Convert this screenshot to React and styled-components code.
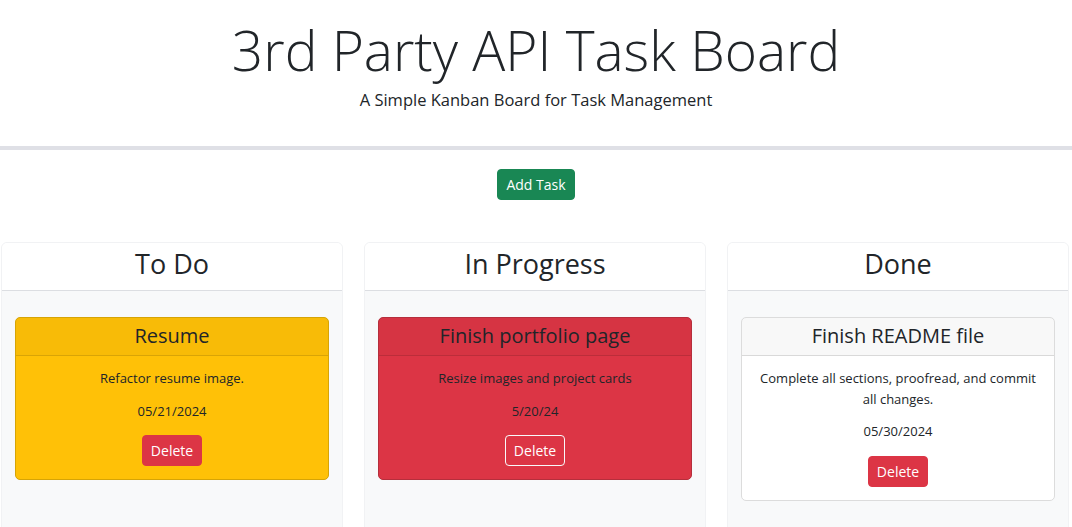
import React from "react";
import styled, { createGlobalStyle, css } from "styled-components";

const GlobalStyle = createGlobalStyle`
  html, body {
    margin: 0;
    padding: 0;
    background: #ffffff;
    color: #212529;
    font-family: "Open Sans", "Noto Sans", sans-serif;
    font-size: 16px;
    line-height: 1.5;
  }
  * { box-sizing: border-box; }
`;

const Header = styled.header`
  text-align: center;
  padding: 17px 16px 34px;
  border-bottom: 4px solid #dfe0e6;
`;

const Title = styled.h1`
  margin: 0;
  font-size: 55px;
  font-weight: 300;
  line-height: 1.2;
  color: #212529;
`;

const Subtitle = styled.p`
  margin: 5px 0 0;
  font-size: 16.5px;
  line-height: 24px;
  color: #212529;
`;

const Toolbar = styled.div`
  display: flex;
  justify-content: center;
  padding: 19px 0 42px;
`;

const Button = styled.button`
  font-family: inherit;
  font-size: 14px;
  line-height: 21px;
  padding: 4px 8px;
  border-radius: 4px;
  border: 1px solid ${(p) => p.$border || p.$bg};
  background: ${(p) => p.$bg};
  color: #ffffff;
  cursor: pointer;
`;

const Board = styled.main`
  display: grid;
  grid-template-columns: repeat(3, 342px);
  column-gap: 21px;
  padding: 0 1px;
`;

const Lane = styled.section`
  display: flex;
  flex-direction: column;
  border: 1px solid #f1f2f4;
  border-radius: 6px;
  overflow: hidden;
  background: #f8f9fa;
`;

const LaneHeader = styled.div`
  background: #ffffff;
  padding: 5px 16px 10px;
  border-bottom: 1px solid #dcdee2;
  text-align: center;
`;

const LaneTitle = styled.h2`
  margin: 0;
  font-size: 27px;
  font-weight: 400;
  line-height: 1.2;
  color: #212529;
`;

const LaneBody = styled.div`
  padding: 26px 13px;
  min-height: 260px;
  display: flex;
  flex-direction: column;
  gap: 16px;
`;

const tones = {
  warning: css`
    background: #ffc107;
    border-color: #d6a406;
  `,
  danger: css`
    background: #dc3545;
    border-color: #b52f3c;
  `,
  plain: css`
    background: #ffffff;
    border-color: #dcdcdc;
  `,
};

const TaskCard = styled.article`
  border: 1px solid;
  border-radius: 5px;
  overflow: hidden;
  text-align: center;
  color: #212529;
  ${(p) => tones[p.$tone]}
`;

const TaskHeader = styled.div`
  padding: 6px 16px 7px;
  background: rgba(33, 37, 41, 0.03);
  border-bottom: 1px solid rgba(0, 0, 0, 0.12);
`;

const TaskTitle = styled.h3`
  margin: 0;
  font-size: 20px;
  font-weight: 400;
  line-height: 24px;
`;

const TaskBody = styled.div`
  padding: 12px 16px 13px;
`;

const TaskText = styled.p`
  margin: 0 0 ${(p) => p.$gap}px;
  font-size: 13px;
  line-height: 20.5px;
`;

const lanes = [
  {
    title: "To Do",
    tasks: [
      {
        title: "Resume",
        desc: "Refactor resume image.",
        date: "05/21/2024",
        tone: "warning",
      },
    ],
  },
  {
    title: "In Progress",
    tasks: [
      {
        title: "Finish portfolio page",
        desc: "Resize images and project cards",
        date: "5/20/24",
        tone: "danger",
        outlined: true,
      },
    ],
  },
  {
    title: "Done",
    tasks: [
      {
        title: "Finish README file",
        desc: "Complete all sections, proofread, and commit all changes.",
        date: "05/30/2024",
        tone: "plain",
      },
    ],
  },
];

export default function App() {
  return (
    <>
      <GlobalStyle />
      <Header>
        <Title>3rd Party API Task Board</Title>
        <Subtitle>A Simple Kanban Board for Task Management</Subtitle>
      </Header>
      <Toolbar>
        <Button $bg="#198754">Add Task</Button>
      </Toolbar>
      <Board>
        {lanes.map((lane) => (
          <Lane key={lane.title}>
            <LaneHeader>
              <LaneTitle>{lane.title}</LaneTitle>
            </LaneHeader>
            <LaneBody>
              {lane.tasks.map((t) => (
                <TaskCard key={t.title} $tone={t.tone}>
                  <TaskHeader>
                    <TaskTitle>{t.title}</TaskTitle>
                  </TaskHeader>
                  <TaskBody>
                    <TaskText $gap={12}>{t.desc}</TaskText>
                    <TaskText $gap={14}>{t.date}</TaskText>
                    <Button
                      $bg="#dc3545"
                      $border={t.outlined ? "#f8f9fa" : undefined}
                    >
                      Delete
                    </Button>
                  </TaskBody>
                </TaskCard>
              ))}
            </LaneBody>
          </Lane>
        ))}
      </Board>
    </>
  );
}
